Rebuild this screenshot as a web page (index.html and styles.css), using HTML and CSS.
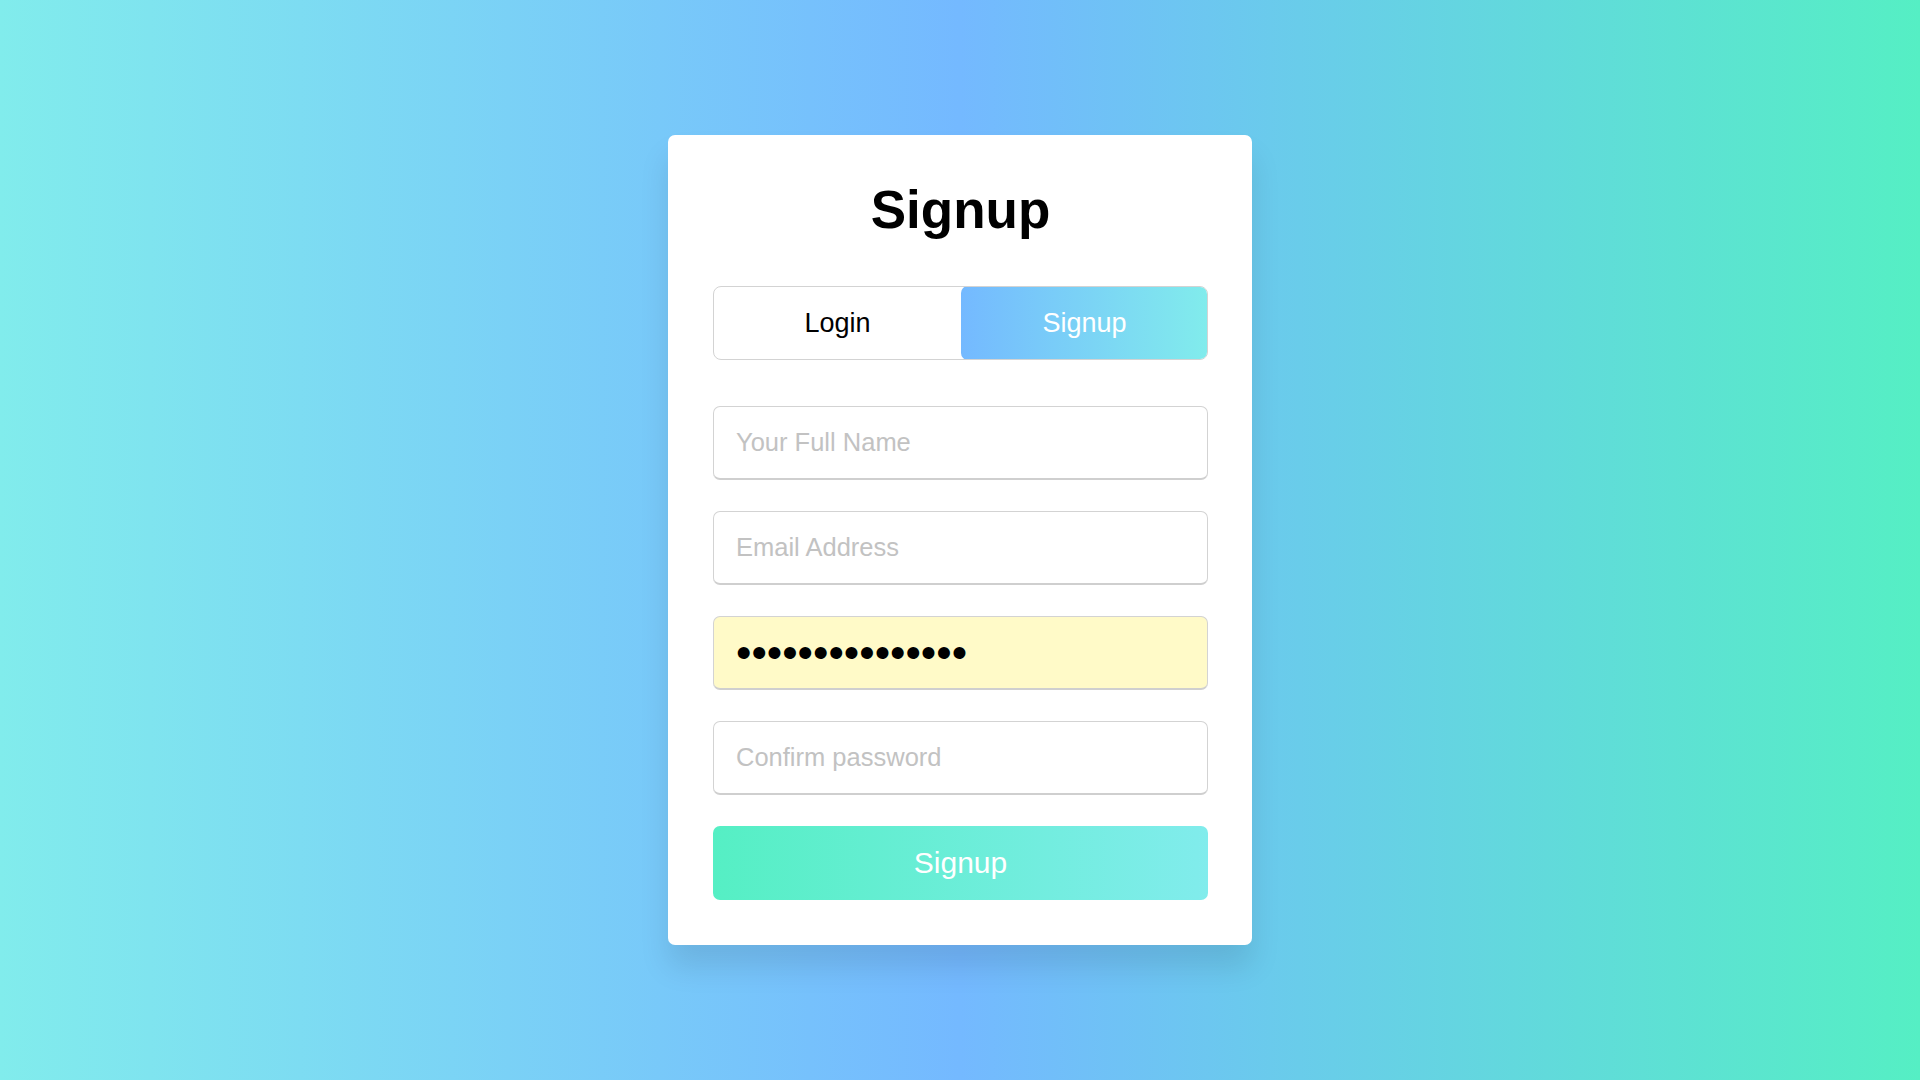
FILE: index.html
```html
<!DOCTYPE html>
<html lang="en">
<head>
<meta charset="utf-8">
<title>Signup</title>
<link rel="stylesheet" href="styles.css">
</head>
<body>
  <div class="wrapper">
    <div class="title">Signup</div>
    <div class="slide-controls">
      <button class="tab">Login</button>
      <button class="tab active">Signup</button>
    </div>
    <form class="form" onsubmit="return false">
      <div class="field"><input type="text" placeholder="Your Full Name"></div>
      <div class="field"><input type="email" placeholder="Email Address"></div>
      <div class="field"><input type="password" class="autofill" value="passwordpasswor"></div>
      <div class="field"><input type="password" placeholder="Confirm password"></div>
      <div class="field btn"><button type="submit" class="submit">Signup</button></div>
    </form>
  </div>
</body>
</html>
```

FILE: styles.css
```css
* {
  box-sizing: border-box;
}

html, body {
  margin: 0;
  padding: 0;
  height: 100%;
}

body {
  font-family: "Liberation Sans", Arial, sans-serif;
  background: linear-gradient(to right, #81ecec 0%, #74b9ff 50%, #55efc4 100%);
  display: flex;
  align-items: center;
  justify-content: center;
  min-height: 100vh;
}

.wrapper {
  width: 584px;
  background: #fff;
  padding: 45px 44px 45px 45px;
  border-radius: 7px;
  box-shadow: 0 22px 30px rgba(0, 0, 0, 0.1);
}

.title {
  font-size: 53px;
  font-weight: 700;
  text-align: center;
  line-height: 60px;
  color: #000;
}

.slide-controls {
  margin-top: 46px;
  height: 74px;
  display: flex;
  border: 1px solid #d3d3d3;
  border-radius: 8px;
  overflow: hidden;
}

.tab {
  flex: 1;
  border: none;
  background: transparent;
  font-family: inherit;
  font-size: 27px;
  color: #000;
  padding: 0;
  margin: 0;
  cursor: pointer;
}

.tab.active {
  color: #fff;
  border-radius: 7px;
  background: linear-gradient(to right, #74b9ff, #81ecec);
  margin: -1px -1px -1px 0;
}

.form {
  margin: 0;
  padding-top: 15px;
}

.field {
  height: 74px;
  margin-top: 31px;
}

.field input {
  width: 100%;
  height: 100%;
  outline: none;
  padding-left: 22px;
  border: 1px solid #d3d3d3;
  border-bottom: 2px solid #cfcfcf;
  border-radius: 7px;
  font-family: inherit;
  font-size: 25.5px;
  color: #000;
  background: #fff;
}

.field input::placeholder {
  color: #c2c2c2;
}

.field input.autofill {
  background: #fffac8;
  font-size: 44px;
  padding-left: 22px;
}

.field.btn {
  height: 74px;
}

.submit {
  width: 100%;
  height: 100%;
  border: none;
  border-radius: 7px;
  background: linear-gradient(to right, #55efc4, #81ecec);
  color: #fff;
  font-family: inherit;
  font-size: 30px;
  cursor: pointer;
}
```
